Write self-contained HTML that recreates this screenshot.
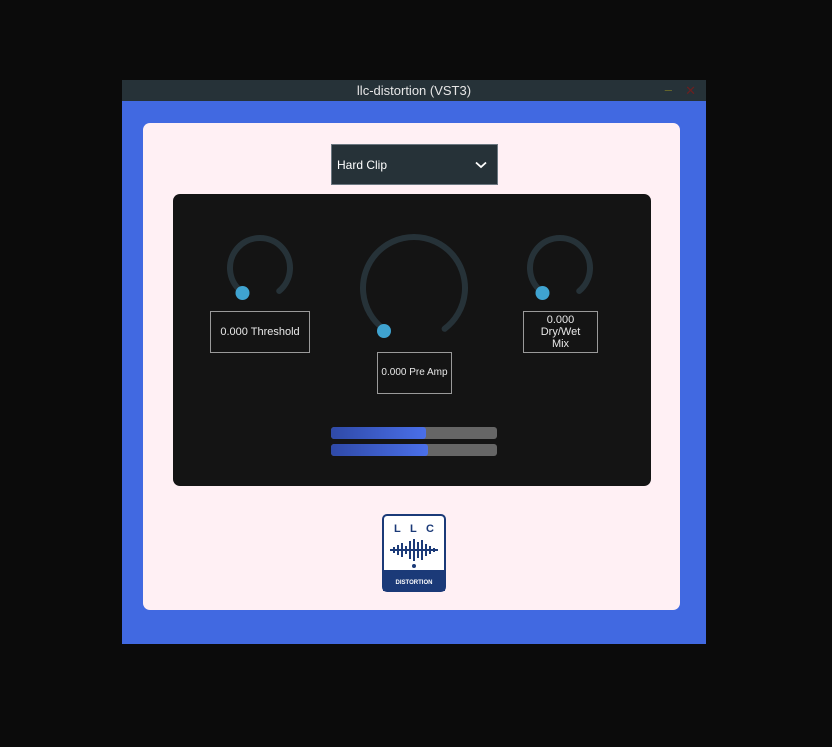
<!DOCTYPE html>
<html><head><meta charset="utf-8"><style>
body{margin:0;width:832px;height:747px;background:#0b0b0b;position:relative;overflow:hidden;font-family:"Liberation Sans","DejaVu Sans",sans-serif}
.abs{position:absolute}
.title{left:122px;top:80px;width:584px;height:21px;background:#263238;color:#e6e6e6;font-size:13px;text-align:center;line-height:22px}
.win{left:122px;top:101px;width:584px;height:543px;background:#4169e1}
.pink{left:143px;top:123px;width:537px;height:487px;background:#fff0f4;border-radius:7px}
.dd{left:331px;top:144px;width:164px;height:39px;background:#263238;border:1px solid #6b7780;color:#fff;font-size:12px;line-height:40px;padding-left:5px;box-sizing:content-box;width:160px}
.panel{left:173px;top:194px;width:478px;height:292px;background:#141414;border-radius:7px}
.box{border:1px solid #9a9a9a;color:#e8e8e8;font-size:11px;text-align:center;display:flex;align-items:center;justify-content:center;line-height:12px}
.bar{left:331px;width:166px;height:12px;background:#666;border-radius:3px;overflow:hidden}
.bar div{height:100%;background:linear-gradient(90deg,#2f4aa8,#4a6fe8);border-radius:3px}
</style></head><body>
<div class="abs title">llc-distortion (VST3)<span style="position:absolute;right:34px;top:-1px;color:#6b6b2a">–</span><span style="position:absolute;right:10px;top:0;color:#6a2020">✕</span></div>
<div class="abs win"></div>
<div class="abs pink"></div>
<div class="abs dd">Hard Clip<svg class="abs" style="left:143px;top:16px" width="12" height="8"><path d="M1 1.5L6 6L11 1.5" stroke="#fff" stroke-width="1.8" fill="none"/></svg></div>
<div class="abs panel"></div>
<svg class="abs" style="left:0;top:0" width="832" height="747">
<g fill="none" stroke="#263238" stroke-width="6" stroke-linecap="round">
<path d="M240.8 291 A30 30 0 1 1 279.2 291"/>
<path d="M540.8 291 A30 30 0 1 1 579.2 291"/>
<path d="M383.4 328.8 A51 51 0 1 1 444.6 328.8"/>
</g>
<g fill="#3fa3d0"><circle cx="242.5" cy="293" r="7"/><circle cx="542.5" cy="293" r="7"/><circle cx="384" cy="331" r="7"/></g>
</svg>
<div class="abs box" style="left:210px;top:311px;width:98px;height:40px">0.000 Threshold</div>
<div class="abs box" style="left:377px;top:352px;width:73px;height:40px;font-size:10px">0.000 Pre Amp</div>
<div class="abs box" style="left:523px;top:311px;width:73px;height:40px">0.000<br>Dry/Wet<br>Mix</div>
<div class="abs bar" style="top:427px"><div style="width:95px"></div></div>
<div class="abs bar" style="top:444px"><div style="width:97px"></div></div>
<svg class="abs" style="left:382px;top:514px" width="64" height="78">
<rect x="1" y="1" width="62" height="76" rx="4" fill="#fff" stroke="#1b3a78" stroke-width="2"/>
<rect x="1" y="56" width="62" height="21" fill="#1b3a78"/>
<text x="12" y="18" font-size="11" font-weight="bold" fill="#1b3a78" font-family="Liberation Sans">L</text>
<text x="28" y="18" font-size="11" font-weight="bold" fill="#1b3a78" font-family="Liberation Sans">L</text>
<text x="44" y="18" font-size="11" font-weight="bold" fill="#1b3a78" font-family="Liberation Sans">C</text>
<g stroke="#1b3a78" stroke-width="2"><path d="M8 36h48M12 33v6M16 31v10M20 29v14M24 32v8M28 27v18M32 25v22M36 28v16M40 26v20M44 30v12M48 32v8M52 34v4"/></g>
<circle cx="32" cy="52" r="2" fill="#1b3a78"/>
<text x="32" y="70" font-size="6" font-weight="bold" fill="#fff" text-anchor="middle" font-family="Liberation Sans">DISTORTION</text>
</svg>
</body></html>
